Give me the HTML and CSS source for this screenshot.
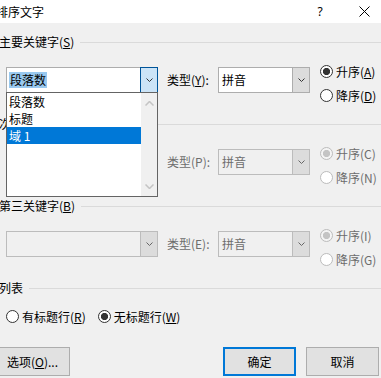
FILE: index.html
```html
<!DOCTYPE html>
<html lang="zh-CN">
<head>
  <meta charset="UTF-8">
  <title>排序文字</title>
  <link rel="stylesheet" href="styles.css">
</head>
<body>
  <div class="titlebar">
    <span class="title">排序文字</span>
    <span class="help">?</span>
    <svg class="close" width="11" height="11" viewBox="0 0 11 11"><path d="M0.5 0.5L10.5 10.5M10.5 0.5L0.5 10.5" stroke="#000" stroke-width="1"/></svg>
  </div>

  <div class="content">
    <div class="group">
      <div class="group-head"><span>主要关键字(<u>S</u>)</span><i class="rule"></i></div>
      <div class="row">
        <div class="combo combo-key is-open">
          <span class="combo-field"><span class="selected">段落数</span></span>
          <span class="combo-btn"><svg width="7" height="4" viewBox="0 0 7 4"><polyline points="0.5,0.5 3.5,3.5 6.5,0.5" fill="none" stroke="#333"/></svg></span>
          <div class="droplist">
            <ul class="items">
              <li>段落数</li>
              <li>标题</li>
              <li class="active">域 1</li>
            </ul>
            <div class="scrollbar">
              <svg width="9" height="5" viewBox="0 0 9 5"><polyline points="0.5,4.5 4.5,0.5 8.5,4.5" fill="none" stroke="#c4c4c4" stroke-width="1.5"/></svg>
              <svg width="9" height="5" viewBox="0 0 9 5"><polyline points="0.5,0.5 4.5,4.5 8.5,0.5" fill="none" stroke="#c4c4c4" stroke-width="1.5"/></svg>
            </div>
          </div>
        </div>
        <span class="type-label">类型(<u>Y</u>):</span>
        <div class="combo combo-type">
          <span class="combo-field">拼音</span>
          <span class="combo-btn"><svg width="7" height="4" viewBox="0 0 7 4"><polyline points="0.5,0.5 3.5,3.5 6.5,0.5" fill="none" stroke="#333"/></svg></span>
        </div>
        <div class="order">
          <label class="radio"><span class="dot checked"></span><span>升序(<u>A</u>)</span></label>
          <label class="radio"><span class="dot"></span><span>降序(<u>D</u>)</span></label>
        </div>
      </div>
    </div>

    <div class="group">
      <div class="group-head"><span>次要关键字(<u>T</u>)</span><i class="rule"></i></div>
      <div class="row disabled">
        <div class="combo combo-key">
          <span class="combo-field"></span>
          <span class="combo-btn"><svg width="7" height="4" viewBox="0 0 7 4"><polyline points="0.5,0.5 3.5,3.5 6.5,0.5" fill="none" stroke="#666"/></svg></span>
        </div>
        <span class="type-label">类型(P):</span>
        <div class="combo combo-type">
          <span class="combo-field">拼音</span>
          <span class="combo-btn"><svg width="7" height="4" viewBox="0 0 7 4"><polyline points="0.5,0.5 3.5,3.5 6.5,0.5" fill="none" stroke="#666"/></svg></span>
        </div>
        <div class="order">
          <label class="radio"><span class="dot checked"></span><span>升序(C)</span></label>
          <label class="radio"><span class="dot"></span><span>降序(N)</span></label>
        </div>
      </div>
    </div>

    <div class="group">
      <div class="group-head"><span>第三关键字(<u>B</u>)</span><i class="rule"></i></div>
      <div class="row disabled">
        <div class="combo combo-key">
          <span class="combo-field"></span>
          <span class="combo-btn"><svg width="7" height="4" viewBox="0 0 7 4"><polyline points="0.5,0.5 3.5,3.5 6.5,0.5" fill="none" stroke="#666"/></svg></span>
        </div>
        <span class="type-label">类型(E):</span>
        <div class="combo combo-type">
          <span class="combo-field">拼音</span>
          <span class="combo-btn"><svg width="7" height="4" viewBox="0 0 7 4"><polyline points="0.5,0.5 3.5,3.5 6.5,0.5" fill="none" stroke="#666"/></svg></span>
        </div>
        <div class="order">
          <label class="radio"><span class="dot checked"></span><span>升序(I)</span></label>
          <label class="radio"><span class="dot"></span><span>降序(G)</span></label>
        </div>
      </div>
    </div>

    <div class="group-head"><span>列表</span><i class="rule"></i></div>
    <div class="header-options">
      <label class="radio"><span class="dot"></span><span>有标题行(<u>R</u>)</span></label>
      <label class="radio"><span class="dot checked"></span><span>无标题行(<u>W</u>)</span></label>
    </div>

    <div class="buttons">
      <button class="btn btn-options">选项(<u>O</u>)...</button>
      <button class="btn btn-ok">确定</button>
      <button class="btn btn-cancel">取消</button>
    </div>
  </div>
</body>
</html>
```

FILE: styles.css
```css
* {
  box-sizing: border-box;
}
html, body {
  margin: 0;
  padding: 0;
}
body {
  width: 381px;
  height: 378px;
  overflow: hidden;
  background: #f0f0f0;
  color: #000;
  font-family: "Noto Sans CJK SC", "Microsoft YaHei", sans-serif;
  font-size: 12px;
}
u {
  text-decoration-thickness: 1px;
  text-underline-offset: 1px;
}

.titlebar {
  display: flex;
  align-items: center;
  height: 23px;
  background: #fff;
}
.title {
  flex: 1;
  margin-left: -4px;
  line-height: 23px;
}
.help {
  width: 6px;
  margin-right: 36px;
  text-align: center;
  font-family: "Noto Sans", sans-serif;
  font-size: 12px;
}
.close {
  margin-right: 11px;
  margin-top: -1px;
}

.content {
  padding-top: 9px;
}
.group {
  height: 82px;
}
.group-head {
  display: flex;
  align-items: center;
  height: 20px;
  margin-left: -1px;
  line-height: 20px;
}
.group-head .rule {
  flex: 1;
  height: 1px;
  margin-left: 6px;
  background: #dadada;
}

.row {
  display: flex;
  align-items: flex-start;
  margin-top: 15px;
}
.combo {
  position: relative;
  display: flex;
  height: 26px;
  background: #fff;
  border: 1px solid #adadad;
}
.combo-field {
  flex: 1;
  display: flex;
  align-items: center;
  padding-left: 3px;
  line-height: 24px;
}
.combo-btn {
  display: flex;
  align-items: center;
  justify-content: center;
  width: 18px;
  margin: -1px -1px -1px 0;
  background: #dcdcdc;
  border: 1px solid #adadad;
}
.combo-key {
  width: 152px;
  margin-left: 6px;
}
.combo-key .combo-field {
  padding-left: 2px;
}
.is-open .combo-btn {
  background: #cce4f7;
  border-color: #005499;
}
.selected {
  padding: 0 1px;
  background: #99c9ef;
  line-height: 16px;
}
.type-label {
  width: 51px;
  margin-left: 9px;
  line-height: 26px;
}
.combo-type {
  width: 92px;
}
.order {
  display: flex;
  flex-direction: column;
  margin-left: 10px;
  margin-top: -8px;
}
.radio {
  display: flex;
  align-items: center;
  gap: 3px;
  height: 24px;
  white-space: nowrap;
}
.dot {
  width: 13px;
  height: 13px;
  border: 1px solid #333;
  border-radius: 50%;
  background: #fff;
}
.dot.checked {
  background: radial-gradient(circle, #333 0 3.3px, #fff 3.9px);
}

.disabled {
  color: #6d6d6d;
}
.disabled .combo {
  background: #f0f0f0;
  border-color: #bcbcbc;
}
.disabled .combo-btn {
  border-color: #bcbcbc;
}
.disabled .dot {
  border-color: #bcbcbc;
}
.disabled .dot.checked {
  background: radial-gradient(circle, #c4c4c4 0 3.3px, #f4f4f4 3.9px);
}

/* open dropdown of the first key, drawn over the second group */
.droplist {
  position: absolute;
  top: 24px;
  left: -1px;
  z-index: 2;
  display: flex;
  width: 152px;
  height: 105px;
  background: #fff;
  border: 1px solid #646464;
}
.items {
  flex: 1;
  margin: 0;
  padding: 0;
  list-style: none;
}
.items li {
  height: 17px;
  padding-left: 2px;
  line-height: 17px;
}
.items li.active {
  background: #0078d7;
  color: #fff;
}
.scrollbar {
  display: flex;
  flex-direction: column;
  justify-content: space-between;
  align-items: center;
  width: 16px;
  padding: 8px 0 7px;
  background: #f0f0f0;
}

.header-options {
  display: flex;
  align-items: center;
  height: 20px;
  margin-top: 8px;
  padding-left: 6px;
}
.header-options .radio + .radio {
  margin-left: 12px;
}

.buttons {
  display: flex;
  margin-top: 21px;
  padding-right: 2px;
}
.btn {
  height: 29px;
  padding: 0;
  background: #e1e1e1;
  border: 1px solid #adadad;
  color: #000;
  font-family: inherit;
  font-size: 12px;
}
.btn-options {
  width: 75px;
  margin-left: -5px;
}
.btn-ok {
  width: 73px;
  margin-left: auto;
  border: 2px solid #0078d7;
}
.btn-cancel {
  width: 73px;
  margin-left: 10px;
}
```
